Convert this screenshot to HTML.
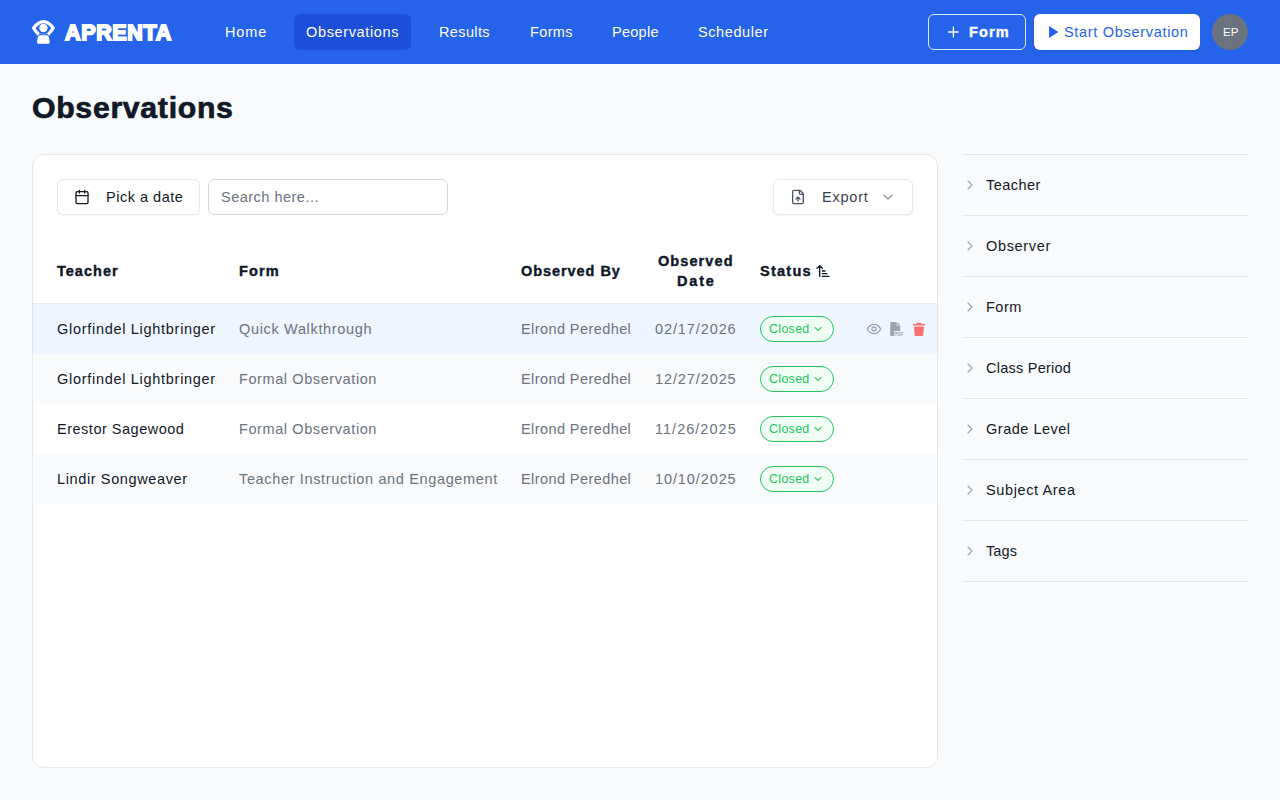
<!DOCTYPE html>
<html>
<head>
<meta charset="utf-8">
<title>Observations</title>
<style>
*{box-sizing:border-box;margin:0;padding:0}
html,body{width:1280px;height:800px;overflow:hidden}
body{background:#f9fafb;font-family:"Liberation Sans",sans-serif;font-size:14.5px;color:#111827;position:relative}
.abs{position:absolute}
.t{position:absolute;white-space:nowrap}
#nav{position:absolute;left:0;top:0;width:1280px;height:64px;background:#2563eb}
.pill{position:absolute;top:14px;height:36px;border-radius:6px;background:#1d4ed8}
#card{position:absolute;left:32px;top:154px;width:906px;height:614px;background:#fff;border:1px solid #e5e7eb;border-radius:12px;overflow:hidden}
.btn{position:absolute;background:#fff;border:1px solid #e5e7eb;border-radius:6px;box-shadow:0 1px 2px rgba(0,0,0,0.05)}
.row{position:absolute;left:33px;width:904px;height:50px}
.badge{position:absolute;left:760px;width:74px;height:26px;border:1px solid #22c55e;background:#f0fdf4;border-radius:13px}
.acc{position:absolute;left:962px;width:286px;height:1px;background:#e5e7eb}
</style>
</head>
<body>
<header id="nav">
  <svg class="abs" style="left:28px;top:16px" width="32" height="32" viewBox="0 0 32 32">
    <path d="M10.8 18.6 Q7.6 15.6 5.6 12 Q15.4 -0.6 25.2 12 Q23.2 15.6 20 18.6" fill="none" stroke="#fff" stroke-width="3.3" stroke-linejoin="round"/>
    <path d="M11.8 17.3 L15.4 18.8 L19 17.3" fill="none" stroke="#fff" stroke-opacity="0.35" stroke-width="1"/>
    <circle cx="15.4" cy="12" r="4.2" fill="#fff"/>
    <path d="M12.2 19.3 H18.6 Q20.6 19.3 21 21.4 L21.7 25.2 Q22 27.8 19.6 27.8 H11.2 Q8.8 27.8 9.1 25.2 L9.8 21.4 Q10.2 19.3 12.2 19.3Z" fill="#fff"/>
  </svg>
  <div class="abs" style="left:65px;top:19.5px;font-size:21.5px;font-weight:bold;color:#fff;line-height:26px;letter-spacing:0.65px;-webkit-text-stroke:1.8px #fff">APRENTA</div>
  <div class="pill" style="left:294px;width:117px"></div>
  <div class="t" style="left:225px;top:22px;font-size:14.5px;line-height:20px;letter-spacing:0.888px;color:#ffffff;">Home</div>
  <div class="t" style="left:306px;top:22px;font-size:14.5px;line-height:20px;letter-spacing:0.647px;color:#ffffff;">Observations</div>
  <div class="t" style="left:439px;top:22px;font-size:14.5px;line-height:20px;letter-spacing:0.367px;color:#ffffff;">Results</div>
  <div class="t" style="left:530px;top:22px;font-size:14.5px;line-height:20px;letter-spacing:0.370px;color:#ffffff;">Forms</div>
  <div class="t" style="left:612px;top:22px;font-size:14.5px;line-height:20px;letter-spacing:0.272px;color:#ffffff;">People</div>
  <div class="t" style="left:698px;top:22px;font-size:14.5px;line-height:20px;letter-spacing:0.599px;color:#ffffff;">Scheduler</div>
  <div class="abs" style="left:928px;top:14px;width:98px;height:36px;border:1px solid rgba(255,255,255,0.85);border-radius:6px"></div>
  <svg class="abs" style="left:947px;top:26px" width="12" height="12" viewBox="0 0 12 12"><path d="M6.4 1.2V10.8M1.6 6H11.2" stroke="#fff" stroke-width="1.4" stroke-linecap="round"/></svg>
  <div class="t" style="left:969px;top:22px;font-size:14.5px;line-height:20px;letter-spacing:1.153px;color:#ffffff;font-weight:bold;-webkit-text-stroke:0.4px #ffffff;">Form</div>
  <div class="abs" style="left:1034px;top:14px;width:166px;height:36px;background:#fff;border-radius:6px;box-shadow:0 1px 2px rgba(0,0,0,0.1)"></div>
  <svg class="abs" style="left:1048px;top:25px" width="12" height="14" viewBox="0 0 12 14"><path d="M1 1.1L10.3 7L1 12.9Z" fill="#2563eb"/></svg>
  <div class="t" style="left:1064px;top:22px;font-size:14.5px;line-height:20px;letter-spacing:0.692px;color:#2563eb;">Start Observation</div>
  <div class="abs" style="left:1212px;top:14px;width:36px;height:36px;border-radius:50%;background:#6b7280"></div>
  <div class="t" style="left:1223px;top:24px;font-size:11.5px;line-height:16px;color:#fff">EP</div>
</header>
<div class="t" style="left:32px;top:90px;font-size:30.24px;line-height:36px;letter-spacing:0.694px;color:#111827;font-weight:bold;-webkit-text-stroke:0.7px #111827;">Observations</div>
<main>
<div id="card"></div>
<div class="btn" style="left:57px;top:179px;width:143px;height:36px"></div>
<svg class="abs" style="left:74px;top:189px" width="16" height="16" viewBox="0 0 24 24" fill="none" stroke="#111827" stroke-width="2" stroke-linecap="round" stroke-linejoin="round"><path d="M8 2v4M16 2v4"/><rect x="3" y="4" width="18" height="18" rx="2"/><path d="M3 10h18"/></svg>
<div class="btn" style="left:208px;top:179px;width:240px;height:36px;border-color:#d1d5db;box-shadow:none"></div>
<div class="btn" style="left:773px;top:179px;width:140px;height:36px"></div>
<svg class="abs" style="left:790px;top:189px" width="16" height="16" viewBox="0 0 24 24" fill="none" stroke="#4b5563" stroke-width="2" stroke-linecap="round" stroke-linejoin="round"><path d="M15 2H6a2 2 0 0 0-2 2v16a2 2 0 0 0 2 2h12a2 2 0 0 0 2-2V7Z"/><path d="M14 2v4a2 2 0 0 0 2 2h4"/><path d="M12 12v6M15 15l-3-3-3 3"/></svg>
<svg class="abs" style="left:880px;top:189px" width="16" height="16" viewBox="0 0 24 24" fill="none" stroke="#858b98" stroke-width="1.9" stroke-linecap="round" stroke-linejoin="round"><path d="m6.2 9.4 5.8 5.8 5.8-5.8"/></svg>
<div class="t" style="left:106px;top:187px;font-size:14.5px;line-height:20px;letter-spacing:0.514px;color:#111827;">Pick a date</div>
<div class="t" style="left:221px;top:187px;font-size:14.5px;line-height:20px;letter-spacing:0.490px;color:#6b7280;">Search here...</div>
<div class="t" style="left:822px;top:187px;font-size:14.5px;line-height:20px;letter-spacing:0.784px;color:#374151;">Export</div>
<div class="t" style="left:57px;top:261px;font-size:14.5px;line-height:20px;letter-spacing:1.010px;color:#0f172a;font-weight:bold;-webkit-text-stroke:0.4px #0f172a;">Teacher</div>
<div class="t" style="left:239px;top:261px;font-size:14.5px;line-height:20px;letter-spacing:1.153px;color:#0f172a;font-weight:bold;-webkit-text-stroke:0.4px #0f172a;">Form</div>
<div class="t" style="left:521px;top:261px;font-size:14.5px;line-height:20px;letter-spacing:0.941px;color:#0f172a;font-weight:bold;-webkit-text-stroke:0.4px #0f172a;">Observed By</div>
<div class="t" style="left:658px;top:251px;font-size:14.5px;line-height:20px;letter-spacing:1.087px;color:#0f172a;font-weight:bold;-webkit-text-stroke:0.4px #0f172a;">Observed</div>
<div class="t" style="left:677px;top:271px;font-size:14.5px;line-height:20px;letter-spacing:1.809px;color:#0f172a;font-weight:bold;-webkit-text-stroke:0.4px #0f172a;">Date</div>
<div class="t" style="left:760px;top:261px;font-size:14.5px;line-height:20px;letter-spacing:1.260px;color:#0f172a;font-weight:bold;-webkit-text-stroke:0.4px #0f172a;">Status</div>
<svg class="abs" style="left:815px;top:263px" width="16" height="16" viewBox="0 0 24 24" fill="none" stroke="#0f172a" stroke-width="2" stroke-linecap="round" stroke-linejoin="round"><path d="m3 8 4-4 4 4M7 4v16M11 12h4M11 16h7M11 20h10"/></svg>
<div class="abs" style="left:33px;top:303px;width:904px;height:1px;background:#e5e7eb"></div>
<div class="row" style="top:304px;background:#eff6ff"></div>
<div class="t" style="left:57px;top:319px;font-size:14.5px;line-height:20px;letter-spacing:0.706px;color:#111827;">Glorfindel Lightbringer</div>
<div class="t" style="left:239px;top:319px;font-size:14.5px;line-height:20px;letter-spacing:0.664px;color:#6b7280;">Quick Walkthrough</div>
<div class="t" style="left:521px;top:319px;font-size:14.5px;line-height:20px;letter-spacing:0.418px;color:#6b7280;">Elrond Peredhel</div>
<div class="t" style="left:655px;top:319px;font-size:14.5px;line-height:20px;letter-spacing:0.902px;color:#6b7280;">02/17/2026</div>
<div class="badge" style="top:316px"></div>
<div class="t" style="left:769px;top:321px;font-size:12.43px;line-height:16px;letter-spacing:0.323px;color:#22c55e;">Closed</div>
<svg class="abs" style="left:812px;top:323px" width="12" height="12" viewBox="0 0 24 24" fill="none" stroke="#22c55e" stroke-opacity="0.85" stroke-width="2.2" stroke-linecap="round" stroke-linejoin="round"><path d="m6 9 6 6 6-6"/></svg>
<svg class="abs" style="left:866px;top:321px" width="16" height="16" viewBox="0 0 24 24" fill="none" stroke="#9ca3af" stroke-width="2" stroke-linecap="round" stroke-linejoin="round"><path d="M2 12s3.5-7 10-7 10 7 10 7-3.5 7-10 7S2 12 2 12Z"/><circle cx="12" cy="12" r="3"/></svg>
<svg class="abs" style="left:889px;top:321px" width="16" height="16" viewBox="0 0 16 16"><path d="M2.2 1H8L11.3 4.3V10H5V15H2.2Q1.2 15 1.2 14V2Q1.2 1 2.2 1Z" fill="#9ca3af"/><path d="M8 0.8V4.3H11.5" fill="none" stroke="#eff6ff" stroke-width="0.7"/><text x="5.3" y="14.9" font-size="4.8" font-weight="bold" textLength="9" lengthAdjust="spacingAndGlyphs" fill="#9ca3af" font-family="Liberation Sans">PDF</text></svg>
<svg class="abs" style="left:911px;top:321px" width="16" height="16" viewBox="0 0 16 16"><path d="M5.5 1.8h5v1.2h3.5v1.5H2V3h3.5Z" fill="#f87171"/><path d="M3 5.5h10l-0.7 8.6a1 1 0 0 1-1 .9H4.7a1 1 0 0 1-1-.9Z" fill="#f87171"/></svg>
<div class="row" style="top:354px;background:#f9fafb"></div>
<div class="t" style="left:57px;top:369px;font-size:14.5px;line-height:20px;letter-spacing:0.706px;color:#111827;">Glorfindel Lightbringer</div>
<div class="t" style="left:239px;top:369px;font-size:14.5px;line-height:20px;letter-spacing:0.595px;color:#6b7280;">Formal Observation</div>
<div class="t" style="left:521px;top:369px;font-size:14.5px;line-height:20px;letter-spacing:0.418px;color:#6b7280;">Elrond Peredhel</div>
<div class="t" style="left:655px;top:369px;font-size:14.5px;line-height:20px;letter-spacing:0.902px;color:#6b7280;">12/27/2025</div>
<div class="badge" style="top:366px"></div>
<div class="t" style="left:769px;top:371px;font-size:12.43px;line-height:16px;letter-spacing:0.323px;color:#22c55e;">Closed</div>
<svg class="abs" style="left:812px;top:373px" width="12" height="12" viewBox="0 0 24 24" fill="none" stroke="#22c55e" stroke-opacity="0.85" stroke-width="2.2" stroke-linecap="round" stroke-linejoin="round"><path d="m6 9 6 6 6-6"/></svg>
<div class="row" style="top:404px;background:#ffffff"></div>
<div class="t" style="left:57px;top:419px;font-size:14.5px;line-height:20px;letter-spacing:0.507px;color:#111827;">Erestor Sagewood</div>
<div class="t" style="left:239px;top:419px;font-size:14.5px;line-height:20px;letter-spacing:0.595px;color:#6b7280;">Formal Observation</div>
<div class="t" style="left:521px;top:419px;font-size:14.5px;line-height:20px;letter-spacing:0.418px;color:#6b7280;">Elrond Peredhel</div>
<div class="t" style="left:655px;top:419px;font-size:14.5px;line-height:20px;letter-spacing:1.022px;color:#6b7280;">11/26/2025</div>
<div class="badge" style="top:416px"></div>
<div class="t" style="left:769px;top:421px;font-size:12.43px;line-height:16px;letter-spacing:0.323px;color:#22c55e;">Closed</div>
<svg class="abs" style="left:812px;top:423px" width="12" height="12" viewBox="0 0 24 24" fill="none" stroke="#22c55e" stroke-opacity="0.85" stroke-width="2.2" stroke-linecap="round" stroke-linejoin="round"><path d="m6 9 6 6 6-6"/></svg>
<div class="row" style="top:454px;background:#f9fafb"></div>
<div class="t" style="left:57px;top:469px;font-size:14.5px;line-height:20px;letter-spacing:0.622px;color:#111827;">Lindir Songweaver</div>
<div class="t" style="left:239px;top:469px;font-size:14.5px;line-height:20px;letter-spacing:0.644px;color:#6b7280;">Teacher Instruction and Engagement</div>
<div class="t" style="left:521px;top:469px;font-size:14.5px;line-height:20px;letter-spacing:0.418px;color:#6b7280;">Elrond Peredhel</div>
<div class="t" style="left:655px;top:469px;font-size:14.5px;line-height:20px;letter-spacing:0.902px;color:#6b7280;">10/10/2025</div>
<div class="badge" style="top:466px"></div>
<div class="t" style="left:769px;top:471px;font-size:12.43px;line-height:16px;letter-spacing:0.323px;color:#22c55e;">Closed</div>
<svg class="abs" style="left:812px;top:473px" width="12" height="12" viewBox="0 0 24 24" fill="none" stroke="#22c55e" stroke-opacity="0.85" stroke-width="2.2" stroke-linecap="round" stroke-linejoin="round"><path d="m6 9 6 6 6-6"/></svg>
</main>
<aside>
<div class="acc" style="top:154px"></div>
<div class="acc" style="top:215px"></div>
<div class="acc" style="top:276px"></div>
<div class="acc" style="top:337px"></div>
<div class="acc" style="top:398px"></div>
<div class="acc" style="top:459px"></div>
<div class="acc" style="top:520px"></div>
<div class="acc" style="top:581px"></div>
<svg class="abs" style="left:962px;top:177px" width="16" height="16" viewBox="0 0 24 24" fill="none" stroke="#9ca3af" stroke-width="1.7" stroke-linecap="round" stroke-linejoin="round"><path d="m9 18 6-6-6-6"/></svg>
<div class="t" style="left:986px;top:175px;font-size:14.5px;line-height:20px;letter-spacing:0.453px;color:#111827;">Teacher</div>
<svg class="abs" style="left:962px;top:238px" width="16" height="16" viewBox="0 0 24 24" fill="none" stroke="#9ca3af" stroke-width="1.7" stroke-linecap="round" stroke-linejoin="round"><path d="m9 18 6-6-6-6"/></svg>
<div class="t" style="left:986px;top:236px;font-size:14.5px;line-height:20px;letter-spacing:0.656px;color:#111827;">Observer</div>
<svg class="abs" style="left:962px;top:299px" width="16" height="16" viewBox="0 0 24 24" fill="none" stroke="#9ca3af" stroke-width="1.7" stroke-linecap="round" stroke-linejoin="round"><path d="m9 18 6-6-6-6"/></svg>
<div class="t" style="left:986px;top:297px;font-size:14.5px;line-height:20px;letter-spacing:0.479px;color:#111827;">Form</div>
<svg class="abs" style="left:962px;top:360px" width="16" height="16" viewBox="0 0 24 24" fill="none" stroke="#9ca3af" stroke-width="1.7" stroke-linecap="round" stroke-linejoin="round"><path d="m9 18 6-6-6-6"/></svg>
<div class="t" style="left:986px;top:358px;font-size:14.5px;line-height:20px;letter-spacing:0.249px;color:#111827;">Class Period</div>
<svg class="abs" style="left:962px;top:421px" width="16" height="16" viewBox="0 0 24 24" fill="none" stroke="#9ca3af" stroke-width="1.7" stroke-linecap="round" stroke-linejoin="round"><path d="m9 18 6-6-6-6"/></svg>
<div class="t" style="left:986px;top:419px;font-size:14.5px;line-height:20px;letter-spacing:0.510px;color:#111827;">Grade Level</div>
<svg class="abs" style="left:962px;top:482px" width="16" height="16" viewBox="0 0 24 24" fill="none" stroke="#9ca3af" stroke-width="1.7" stroke-linecap="round" stroke-linejoin="round"><path d="m9 18 6-6-6-6"/></svg>
<div class="t" style="left:986px;top:480px;font-size:14.5px;line-height:20px;letter-spacing:0.617px;color:#111827;">Subject Area</div>
<svg class="abs" style="left:962px;top:543px" width="16" height="16" viewBox="0 0 24 24" fill="none" stroke="#9ca3af" stroke-width="1.7" stroke-linecap="round" stroke-linejoin="round"><path d="m9 18 6-6-6-6"/></svg>
<div class="t" style="left:986px;top:541px;font-size:14.5px;line-height:20px;letter-spacing:0.122px;color:#111827;">Tags</div>
</aside>
</body>
</html>
